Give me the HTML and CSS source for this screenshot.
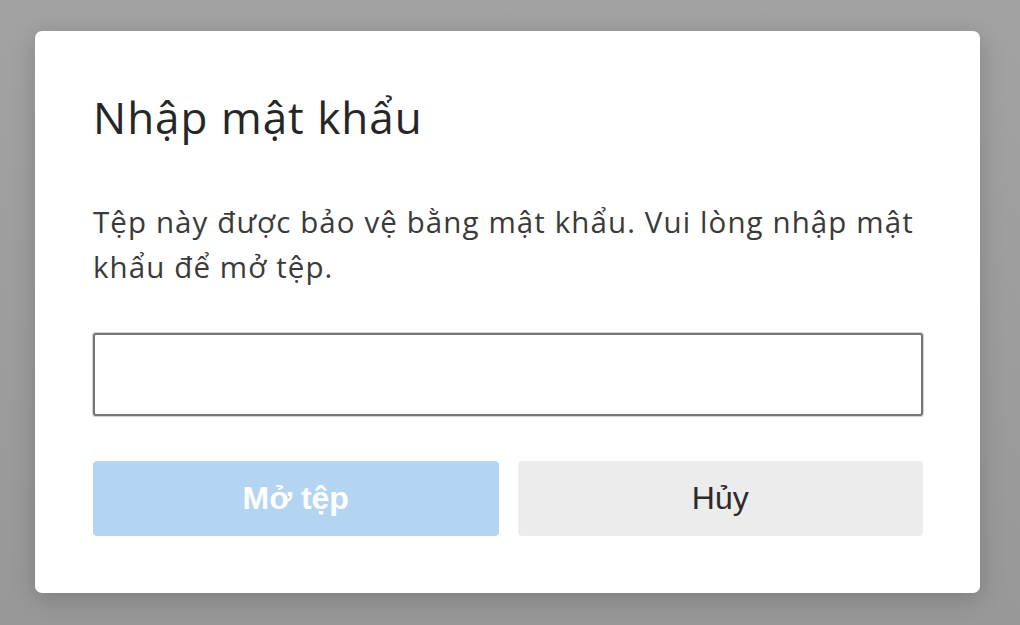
FILE: index.html
```html
<!DOCTYPE html>
<html lang="vi">
<head>
<meta charset="utf-8">
<title>Nhập mật khẩu</title>
<link rel="stylesheet" href="styles.css">
</head>
<body>
<div class="dialog">
  <h1 class="title">Nhập mật khẩu</h1>
  <p class="message">Tệp này được bảo vệ bằng mật khẩu. Vui lòng nhập mật khẩu để mở tệp.</p>
  <input class="password" type="password" aria-label="Mật khẩu">
  <div class="actions">
    <button class="btn btn-primary" disabled>Mở tệp</button>
    <button class="btn btn-secondary">Hủy</button>
  </div>
</div>
</body>
</html>
```

FILE: styles.css
```css
html, body {
  margin: 0;
  padding: 0;
}
body {
  width: 1020px;
  height: 625px;
  background: linear-gradient(#a2a2a2, #989898);
  overflow: hidden;
  font-family: "Open Sans", "Noto Sans", sans-serif;
}
.dialog {
  box-sizing: border-box;
  width: 945px;
  height: 562px;
  margin: 31px 0 0 35px;
  padding: 57px 57px 57px 58px;
  background: #ffffff;
  border-radius: 7px;
  box-shadow: 0 6px 24px rgba(0, 0, 0, 0.18);
  display: flex;
  flex-direction: column;
}
.title {
  margin: 0;
  font-size: 44px;
  line-height: 58px;
  letter-spacing: 1px;
  font-weight: 400;
  color: #262626;
}
.message {
  margin: 53px 0 0;
  font-size: 29.5px;
  line-height: 45px;
  letter-spacing: 1.1px;
  color: #3a3a3a;
}
.password {
  box-sizing: border-box;
  margin: 44px 0 0;
  width: 830px;
  height: 83px;
  border: 2px solid #767676;
  border-radius: 3px;
  background: #fff;
  box-shadow: 0 0 0 1px #d0d0d0;
  outline: none;
}
.actions {
  margin-top: 45px;
  display: flex;
  gap: 19px;
}
.btn {
  flex: 1;
  height: 75px;
  border: none;
  border-radius: 4px;
  font-family: "Liberation Sans", Arial, sans-serif;
  font-size: 32px;
  padding: 0;
}
.btn-primary {
  background: #b3d5f1;
  color: #ffffff;
  font-weight: 700;
}
.btn-secondary {
  background: #ececec;
  color: #2b2b2b;
}
```
